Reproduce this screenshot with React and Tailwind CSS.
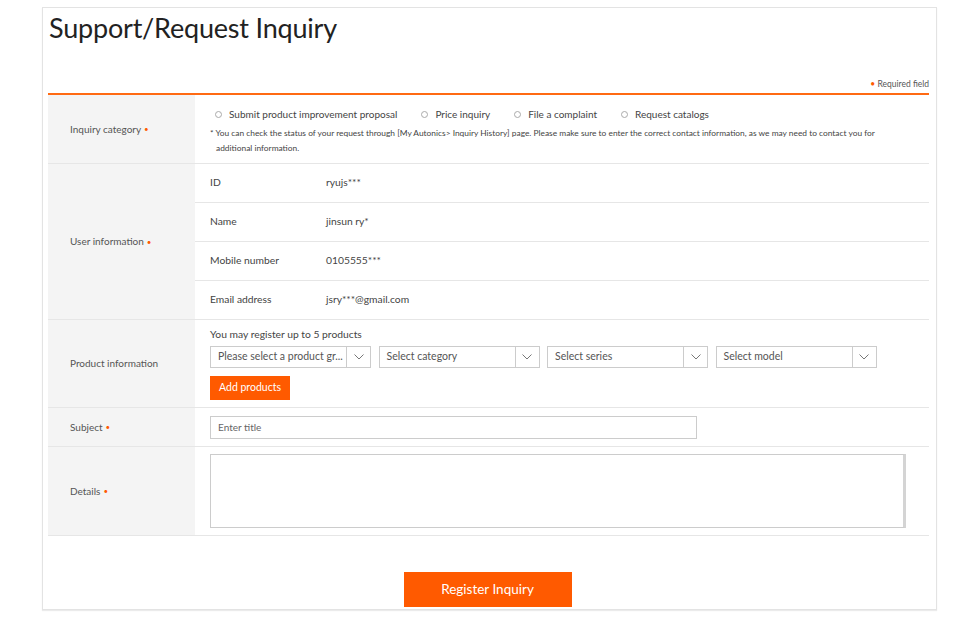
import React from "react";

const font = { fontFamily: "Lato, 'Noto Sans', sans-serif" };

function Star() {
  return <span className="text-[#ff5a00] ml-[3px] text-[8px] align-middle">•</span>;
}

function Radio({ label }) {
  return (
    <div className="flex items-center gap-[7px]">
      <span className="w-[7px] h-[7px] rounded-full border border-[#aaa] bg-white inline-block" />
      <span className="text-[10px] text-[#444]">{label}</span>
    </div>
  );
}

function Select({ label }) {
  return (
    <div className="w-[161px] h-[22px] border border-[#ccc] flex bg-white">
      <div className="flex-1 flex items-center pl-[7px] text-[10.5px] text-[#555] truncate overflow-hidden whitespace-nowrap">
        {label}
      </div>
      <div className="w-[24px] border-l border-[#ccc] flex items-center justify-center">
        <svg width="10" height="6" viewBox="0 0 10 6" fill="none">
          <path d="M0.5 0.5 L5 5 L9.5 0.5" stroke="#777" strokeWidth="1" />
        </svg>
      </div>
    </div>
  );
}

function Label({ children, star }) {
  return (
    <div className="w-[147px] shrink-0 bg-[#f4f4f4] flex items-center pl-[22px] text-[10px] text-[#555]">
      {children}
      {star && <Star />}
    </div>
  );
}

export default function App() {
  return (
    <div className="w-[980px] h-[619px] bg-white overflow-hidden" style={font}>
      <div className="ml-[42px] mt-[7px] w-[895px] h-[603px] border border-[#e3e3e3] shadow-[0_1px_1px_rgba(0,0,0,0.08)] pl-[5px] pr-[7px]">
        <h1 className="text-[27px] leading-[34px] text-[#222] pt-[3px] pl-[1px] tracking-[-0.2px]">Support/Request Inquiry</h1>
        <div className="text-right text-[8.5px] text-[#555] mt-[33px] h-[12px] leading-[12px]">
          <span className="text-[#ff5a00]">•</span> Required field
        </div>
        <div className="h-[2px] bg-[#ff6a13] mt-[3px]" />

        {/* Inquiry category */}
        <div className="flex h-[69px] border-b border-[#e6e6e6]">
          <Label star>Inquiry category</Label>
          <div className="flex-1 pl-[15px] pt-[12px]">
            <div className="flex items-center gap-[24px] pl-[5px] h-[14px]">
              <Radio label="Submit product improvement proposal" />
              <Radio label="Price inquiry" />
              <Radio label="File a complaint" />
              <Radio label="Request catalogs" />
            </div>
            <div className="mt-[5px] text-[8.4px] leading-[15px] text-[#444] whitespace-nowrap">
              <div>* You can check the status of your request through [My Autonics&gt; Inquiry History] page. Please make sure to enter the correct contact information, as we may need to contact you for</div>
              <div className="pl-[6px]">additional information.</div>
            </div>
          </div>
        </div>

        {/* User information */}
        <div className="flex border-b border-[#e6e6e6]">
          <Label star>User information</Label>
          <div className="flex-1 text-[10.3px] text-[#444]">
            {[
              ["ID", "ryujs***"],
              ["Name", "jinsun ry*"],
              ["Mobile number", "0105555***"],
              ["Email address", "jsry***@gmail.com"],
            ].map(([k, v], i) => (
              <div key={k} className={"flex items-center pl-[15px] " + (i < 3 ? "h-[39px] border-b border-[#e6e6e6]" : "h-[38px]")}>
                <div className="w-[116px]">{k}</div>
                <div>{v}</div>
              </div>
            ))}
          </div>
        </div>

        {/* Product information */}
        <div className="flex h-[88px] border-b border-[#e6e6e6]">
          <Label>Product information</Label>
          <div className="flex-1 pl-[15px] pt-[8px]">
            <div className="text-[10.3px] text-[#444] leading-[13px]">You may register up to 5 products</div>
            <div className="flex gap-[7.5px] mt-[5px]">
              <Select label="Please select a product gr..." />
              <Select label="Select category" />
              <Select label="Select series" />
              <Select label="Select model" />
            </div>
            <button className="mt-[8px] w-[80px] h-[24px] bg-[#ff5a00] text-white text-[10.5px] flex items-center justify-center">
              Add products
            </button>
          </div>
        </div>

        {/* Subject */}
        <div className="flex h-[39px] border-b border-[#e6e6e6]">
          <Label star>Subject</Label>
          <div className="flex-1 pl-[15px] flex items-center">
            <div className="w-[487px] h-[23px] border border-[#ccc] flex items-center pl-[7px] text-[10px] text-[#666]">
              Enter title
            </div>
          </div>
        </div>

        {/* Details */}
        <div className="flex h-[89px] border-b border-[#e6e6e6]">
          <Label star>Details</Label>
          <div className="flex-1 pl-[15px] pt-[7px]">
            <div className="w-[696px] h-[74px] border border-[#ccc] border-r-[3px] border-r-[#d4d4d4]" />
          </div>
        </div>

        <div className="flex justify-center pt-[36px]">
          <button className="ml-[-2px] w-[168px] h-[35px] bg-[#ff5a00] text-white text-[13.5px] flex items-center justify-center">
            Register Inquiry
          </button>
        </div>
      </div>
    </div>
  );
}
